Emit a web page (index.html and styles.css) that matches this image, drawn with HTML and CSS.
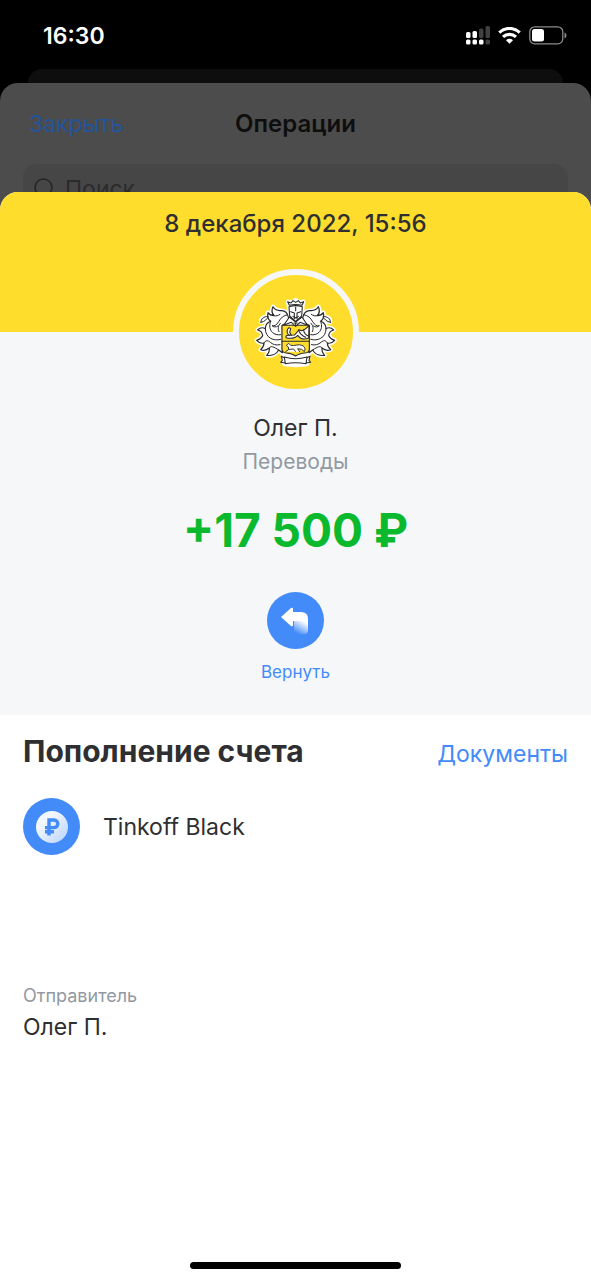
FILE: index.html
```html
<!DOCTYPE html>
<html lang="ru">

<head>
    <meta charset="UTF-8">
    <meta name="viewport" content="viewport-fit=cover, width=device-width, initial-scale=1.0">
    <title>Операция</title>
    <link rel="stylesheet" href="styles.css">
</head>

<body>
    <div class="status-bar">
        <span class="time">16:30</span>
        <div class="status-icons">
            <svg width="24" height="19" viewBox="0 0 24 19" fill="#fff">
                <rect x="0" y="6" width="4.500" height="6" rx="1.500" />
                <rect x="6.500" y="5" width="4.500" height="7" rx="1.500" />
                <rect x="13" y="2.500" width="4.500" height="9.500" rx="1.500" opacity=".25" />
                <rect x="19.500" y="0" width="4.500" height="12" rx="1.500" opacity=".25" />
                <rect x="0" y="13.500" width="4.500" height="5" rx="1.500" />
                <rect x="6.500" y="13.500" width="4.500" height="5" rx="1.500" />
                <rect x="13" y="13.500" width="4.500" height="5" rx="1.500" />
                <rect x="19.500" y="13.500" width="4.500" height="5" rx="1.500" opacity=".25" />
            </svg>
            <svg width="23" height="17" viewBox="0 0 23 17" fill="none" stroke="#fff" stroke-width="3.200">
                <path d="M1.300 5.600a14.600 14.600 0 0 1 20.400 0" />
                <path d="M5 9.900a9.400 9.400 0 0 1 13 0" />
                <path d="M11.500 16.800L8 13.300a5 5 0 0 1 7 0z" fill="#fff" stroke="none" />
            </svg>
            <svg width="38" height="19" viewBox="0 0 38 19">
                <rect x=".8" y=".8" width="33" height="17" rx="5" fill="none" stroke="#8a8a8a" stroke-width="1.300" />
                <rect x="3" y="3" width="12" height="12.600" rx="2.500" fill="#fff" />
                <path d="M35.500 6.500c2.600 1 2.600 5 0 6z" fill="#8a8a8a" />
            </svg>
        </div>
    </div>

    <div class="back-card"></div>
    <div class="operations">
        <header class="operations-header">
            <button class="close" type="button">Закрыть</button>
            <h2 class="operations-title">Операции</h2>
        </header>
        <label class="search">
            <svg width="22" height="22" viewBox="0 0 22 22" fill="none" stroke="#262626" stroke-width="1.600">
                <circle cx="9.500" cy="9.500" r="8.500" />
                <path d="M15.500 15.500l5.500 5.500" />
            </svg>
            <input class="search-input" type="search" placeholder="Поиск" aria-label="Поиск">
        </label>
    </div>

    <main class="sheet">
        <div class="sheet-top">
            <time datetime="2022-12-08T15:56">8 декабря 2022, 15:56</time>
        </div>

        <section class="summary">
            <div class="avatar">
                <svg width="90" height="85" viewBox="0 0 270 255" stroke-linejoin="round" stroke-linecap="round">
                    <defs>
                        <path id="mantle" d="M113 84C110 68 100 60 87 62C79 61 70 57 66 50C61 60 63 70 69 77C61 77 55 74 51 68C48 79 52 89 59 94C49 98 43 106 43 116C36 112 27 113 20 120C29 122 34 128 35 137C31 144 25 149 17 151C23 158 31 161 39 159C39 167 35 174 29 179C39 183 48 180 55 174C56 183 53 190 47 196C62 198 77 192 83 180L94 188V106C103 103 109 97 113 92Z" />
                        <g id="folds">
                            <path d="M110 74C97 76 89 84 83 95C77 105 71 109 63 107C68 112 75 112 81 108" />
                            <path d="M69 77C75 79 82 77 87 73" />
                            <path d="M59 94C54 107 56 119 64 127C70 133 79 136 89 134" />
                            <path d="M43 116C43 129 49 140 59 145C68 150 78 151 89 148" />
                            <path d="M39 159C44 149 51 151 58 157C65 163 75 167 87 164" />
                            <path d="M55 174C59 166 68 170 83 180" />
                            <path d="M88 100C81 108 80 116 84 125" />
                            <path d="M30 97C29 86 38 80 52 79C47 89 41 95 30 97Z" fill="#fff" />
                        </g>
                    </defs>
                    <g fill="#fff" stroke="#fff" stroke-width="13">
                        <use href="#mantle" />
                        <use href="#mantle" transform="translate(268 0) scale(-1 1)" />
                        <path d="M31 96C29 85 38 80 50 79C46 88 42 94 31 96ZM237 96C239 85 230 80 218 79C222 88 226 94 237 96Z" />
                        <path d="M114 48L111 35L123 38L134 30L145 38L157 35L154 48V92L175 106V190L134 202L93 190V106L114 92ZM96 200L134 207L172 200L168 222L134 225L100 222Z" />
                    </g>
                    <g fill="#fff" stroke="#29292b" stroke-width="3.500">
                        <use href="#mantle" />
                        <use href="#mantle" transform="translate(268 0) scale(-1 1)" />
                    </g>
                    <g fill="none" stroke="#29292b" stroke-width="3">
                        <use href="#folds" />
                        <use href="#folds" transform="translate(268 0) scale(-1 1)" />
                    </g>
                    <g fill="#fff" stroke="#29292b" stroke-width="3.200">
                        <path d="M93 106H175V177Q175 188 162 189Q144 190 134 198Q124 190 106 189Q93 188 93 177Z" fill="#ffdd2d" />
                        <path d="M114 50C127 46 141 46 154 50L152 78L134 94L116 78Z" />
                        <path d="M115 46L110 35L120 39L126 32L134 37L142 32L148 39L158 35L153 46Q134 41 115 46Z" />
                        <path d="M119 65L130 69V86M149 65L138 69V86" fill="none" />
                        <path d="M134 51V62M126 79L134 84L142 79" fill="none" />
                        <path d="M115 81L99 105L121 97L134 109L147 97L169 105L153 81L134 96Z" />
                        <path d="M134 99V107M129 99H139" />
                        <path d="M174 107L173 144C158 151 147 145 140 136C132 146 119 146 105 143C104 138 108 134 114 136L130 135C137 130 139 124 144 119C151 125 163 119 174 107Z" />
                        <path d="M143 121C146 130 153 137 164 142M158 119C158 128 164 134 172 138" fill="none" />
                        <path d="M113 135C107 128 106 119 114 113L119 116L116 127L121 135Z" />
                        <path d="M93 154H175" />
                        <path d="M104 185L113 179L112 171L106 166L113 160L119 166C129 169 143 161 153 166C163 170 163 178 160 185L152 178L140 176L146 185M115 178L128 177L133 184" stroke-width="2.800" />
                        <path d="M100 201Q134 211 168 201L165 221Q134 216 103 221ZM100 203L91 199L94 211L89 217L103 219M168 203L177 199L174 211L179 217L165 219" />
                    </g>
                </svg>
            </div>
            <h1 class="name">Олег П.</h1>
            <p class="category">Переводы</p>
            <p class="amount">+17 500 ₽</p>
            <button class="refund" type="button">
                <span class="round-icon">
                    <svg width="30" height="28" viewBox="0 0 30 28">
                        <defs>
                            <linearGradient id="fade" gradientUnits="userSpaceOnUse" x1="25" y1="15" x2="18" y2="27">
                                <stop offset="0" stop-color="#fff" />
                                <stop offset="1" stop-color="#fff" stop-opacity="0" />
                            </linearGradient>
                        </defs>
                        <path d="M14 14H28V23Q28 27 24 27H14Z" fill="url(#fade)" />
                        <path d="M1 10L11 1Q13 0 13 2V5H21Q28 5 28 12V14H13V18Q13 20 11 19Z" fill="#fff" />
                    </svg>
                </span>
                <span class="refund-label">Вернуть</span>
            </button>
        </section>

        <section class="details">
            <div class="details-header">
                <h2 class="details-title">Пополнение счета</h2>
                <a class="documents" href="#documents">Документы</a>
            </div>
            <div class="account">
                <span class="round-icon">
                    <svg width="32" height="32" viewBox="0 0 32 32">
                        <defs>
                            <linearGradient id="coin" x1="0" y1="0" x2="1" y2="1">
                                <stop offset=".3" stop-color="#f2f7ff" />
                                <stop offset="1" stop-color="#b9d2fc" />
                            </linearGradient>
                        </defs>
                        <circle cx="16" cy="16" r="16" fill="url(#coin)" />
                        <path d="M13 24.500V9h5a3.800 3.800 0 0 1 0 7.600H9M9 20.800h9" fill="none" stroke="#428bf9" stroke-width="3.400" />
                    </svg>
                </span>
                <span class="account-name">Tinkoff Black</span>
            </div>
            <dl class="sender">
                <dt>Отправитель</dt>
                <dd>Олег П.</dd>
            </dl>
        </section>
        <div class="home-indicator"></div>
    </main>
</body>

</html>
```
FILE: styles.css
```css
* {
    box-sizing: border-box;
}

html,
body {
    margin: 0;
    min-height: 100%;
}

body {
    display: flex;
    flex-direction: column;
    min-height: 100vh;
    background: #000000;
    color: #2f2f31;
    font-family: Inter, "Liberation Sans", sans-serif;
    font-size: 23px;
    line-height: 32px;
}

h1,
h2,
p,
dl,
dd {
    margin: 0;
    font-size: 23px;
    font-weight: 400;
}

button {
    padding: 0;
    border: 0;
    background: none;
    font: inherit;
    cursor: pointer;
}

.status-bar {
    display: flex;
    justify-content: space-between;
    align-items: center;
    height: 69px;
    padding: 2px 24px 0 43px;
    color: #ffffff;
}

.time {
    font-weight: 600;
}

.status-icons {
    display: flex;
    align-items: center;
    gap: 8px;
}

.back-card {
    height: 14px;
    margin: 0 28px;
    border-radius: 14px 14px 0 0;
    background: #0e0e0e;
}

.operations {
    padding: 0 23px;
    border-radius: 18px 18px 0 0;
    background: #4c4c4c;
}

.operations-header {
    display: grid;
    grid-template-columns: 1fr auto 1fr;
    align-items: center;
    height: 81px;
    padding: 0 6px;
}

.close {
    justify-self: start;
    color: #24549b;
}

.operations-title {
    color: #0e0e0f;
    font-size: 24px;
    font-weight: 600;
}

.search {
    display: flex;
    align-items: center;
    gap: 9px;
    height: 50px;
    padding: 0 11px;
    border-radius: 14px;
    background: #464646;
}

.search-input {
    flex: 1;
    min-width: 0;
    padding: 0;
    border: 0;
    outline: 0;
    background: transparent;
    color: #262626;
    font: inherit;
}

.search-input::placeholder {
    color: #2b2b2c;
}

.sheet {
    position: relative;
    display: flex;
    flex: 1;
    flex-direction: column;
    margin-top: -22px;
    border-radius: 18px 18px 0 0;
    overflow: hidden;
    background: #ffffff;
}

.sheet-top {
    height: 140px;
    padding-top: 16px;
    background: #ffdd2d;
    text-align: center;
    font-size: 24px;
    font-weight: 500;
}

.summary {
    display: flex;
    flex-direction: column;
    align-items: center;
    padding-bottom: 31px;
    background: #f6f7f8;
}

.avatar {
    display: flex;
    justify-content: center;
    align-items: center;
    width: 126px;
    height: 126px;
    margin-top: -63px;
    border: 6px solid #f6f7f8;
    border-radius: 50%;
    background: #ffdd2d;
}

.name {
    margin-top: 17px;
}

.category {
    margin-top: 2px;
    color: #9299a2;
    font-size: 21px;
}

.amount {
    margin-top: 24px;
    color: #0bb92f;
    font-size: 46px;
    font-weight: 700;
    line-height: 56px;
}

.refund {
    display: flex;
    flex-direction: column;
    align-items: center;
    gap: 11px;
    margin-top: 34px;
}

.round-icon {
    display: flex;
    justify-content: center;
    align-items: center;
    width: 57px;
    height: 57px;
    border-radius: 50%;
    background: #428bf9;
}

.refund-label {
    color: #428bf9;
    font-size: 17px;
    line-height: 24px;
}

.details {
    flex: 1;
    padding: 20px 23px;
}

.details-header {
    display: flex;
    justify-content: space-between;
    align-items: baseline;
}

.details-title {
    font-size: 30px;
    font-weight: 700;
}

.documents {
    color: #428bf9;
    text-decoration: none;
}

.account {
    display: flex;
    align-items: center;
    gap: 23px;
    margin-top: 28px;
}

.sender {
    margin-top: 129px;
}

.sender dt {
    color: #9299a2;
    font-size: 18px;
    line-height: 24px;
}

.sender dd {
    margin-top: 3px;
}

.home-indicator {
    align-self: center;
    width: 211px;
    height: 7px;
    margin-bottom: 11px;
    border-radius: 4px;
    background: #000000;
}
```
